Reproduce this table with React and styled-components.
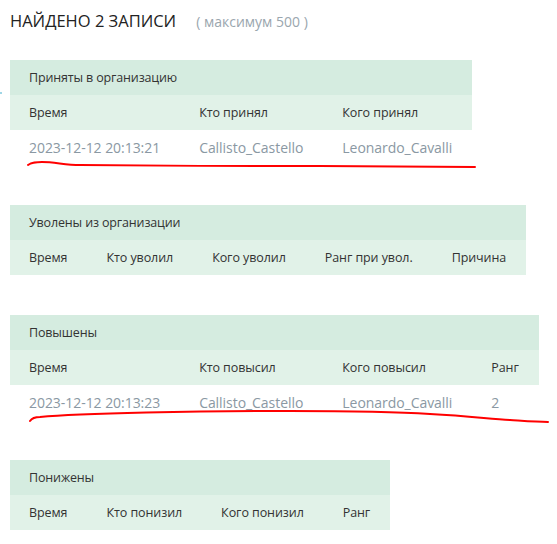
import React from "react";
import styled, { createGlobalStyle } from "styled-components";

const Global = createGlobalStyle`
  html, body { margin: 0; padding: 0; background: #fff; }
  body { font-family: "Open Sans", "Noto Sans", sans-serif; color: #333; }
`;

const Page = styled.div`
  position: relative;
  padding: 9px 10px 0 10px;
`;

const Heading = styled.div`
  display: flex;
  align-items: baseline;
  gap: 20px;
  height: 26px;
`;

const Title = styled.h1`
  margin: 0;
  font-size: 16.5px;
  font-weight: 400;
  color: #222;
  text-transform: uppercase;
`;

const Sub = styled.span`
  font-size: 14px;
  color: #9aa6ae;
`;

const List = styled.div`
  display: flex;
  flex-direction: column;
  align-items: flex-start;
  gap: 40px;
  margin-top: 25px;
`;

const Table = styled.table`
  border-collapse: collapse;
  border-spacing: 0;
`;

const Caption = styled.th`
  background: #d5ece0;
  height: 35px;
  padding: 0 19px;
  text-align: left;
  font-weight: 400;
  font-size: 12.5px;
  letter-spacing: -0.15px;
  color: #333;
`;

const Head = styled.th`
  background: #e1f2e8;
  height: 35px;
  padding: 0 20px 0 19px;
  text-align: left;
  font-weight: 400;
  font-size: 12.5px;
  letter-spacing: -0.08px;
  color: #333;
  white-space: nowrap;
`;

const Cell = styled.td`
  height: 35px;
  padding: 0 20px 0 19px;
  font-size: 14px;
  letter-spacing: -0.05px;
  color: #8a98a3;
  white-space: nowrap;
`;

const Mark = styled.svg`
  position: absolute;
  left: 0;
  top: 0;
  pointer-events: none;
  overflow: visible;
`;

const Dot = styled.span`
  position: absolute;
  left: 0;
  top: 92px;
  width: 2px;
  height: 2px;
  background: #9fd6e6;
`;

function Section({ title, cols, rows = [] }) {
  return (
    <Table>
      <thead>
        <tr>
          <Caption colSpan={cols.length}>{title}</Caption>
        </tr>
        <tr>
          {cols.map((c) => (
            <Head key={c}>{c}</Head>
          ))}
        </tr>
      </thead>
      <tbody>
        {rows.map((r, i) => (
          <tr key={i}>
            {r.map((v, j) => (
              <Cell key={j}>{v}</Cell>
            ))}
          </tr>
        ))}
      </tbody>
    </Table>
  );
}

export default function App() {
  return (
    <>
      <Global />
      <Page>
        <Heading>
          <Title>Найдено 2 записи</Title>
          <Sub>( максимум 500 )</Sub>
        </Heading>
        <List>
          <Section
            title="Приняты в организацию"
            cols={["Время", "Кто принял", "Кого принял"]}
            rows={[["2023-12-12 20:13:21", "Callisto_Castello", "Leonardo_Cavalli"]]}
          />
          <Section
            title="Уволены из организации"
            cols={["Время", "Кто уволил", "Кого уволил", "Ранг при увол.", "Причина"]}
          />
          <Section
            title="Повышены"
            cols={["Время", "Кто повысил", "Кого повысил", "Ранг"]}
            rows={[["2023-12-12 20:13:23", "Callisto_Castello", "Leonardo_Cavalli", "2"]]}
          />
          <Section
            title="Понижены"
            cols={["Время", "Кто понизил", "Кого понизил", "Ранг"]}
          />
        </List>
        <Dot />
        <Mark width="557" height="544">
          <path
            d="M28 165 C32 162 36 162 42 162 C55 162 65 165 80 165 C150 166 250 166 320 166 C400 167 440 167 475 167"
            fill="none"
            stroke="#f00"
            strokeWidth="2"
            strokeLinecap="round"
          />
          <path
            d="M30 421 C32 418 35 417 40 417 C80 413 200 411 290 411 C360 411 400 412 430 414 C470 416 490 419 510 420 C525 421 537 422 548 422"
            fill="none"
            stroke="#f00"
            strokeWidth="2"
            strokeLinecap="round"
          />
        </Mark>
      </Page>
    </>
  );
}
